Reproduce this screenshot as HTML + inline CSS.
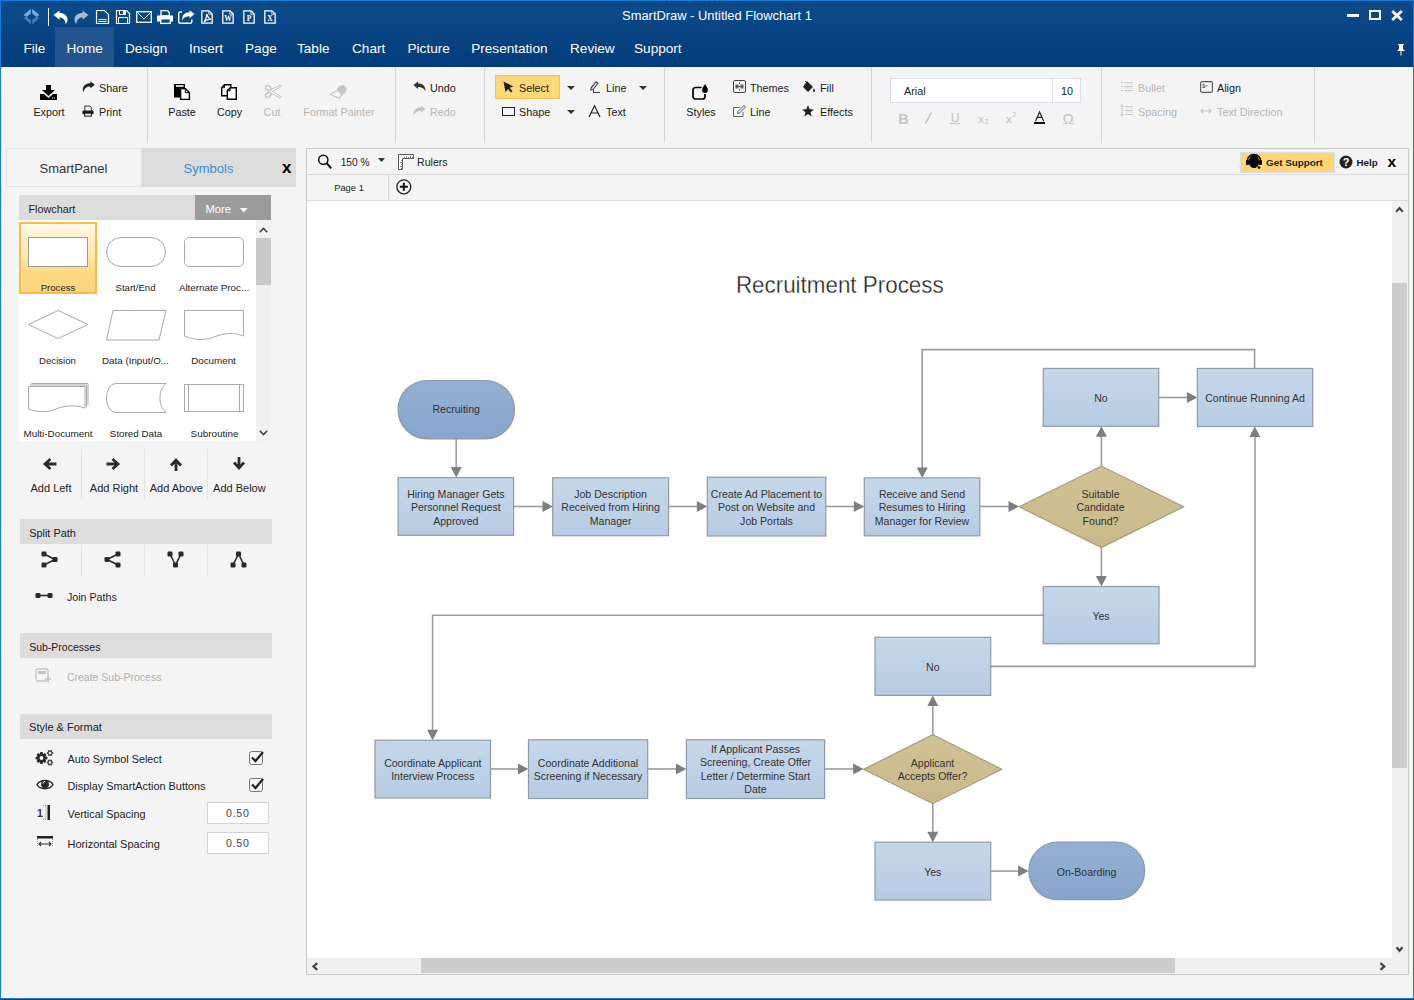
<!DOCTYPE html>
<html><head><meta charset="utf-8">
<style>
*{box-sizing:border-box;margin:0;padding:0}
html,body{width:1414px;height:1000px;overflow:hidden}
body{position:relative;background:#f4f4f4;font-family:"Liberation Sans",sans-serif;color:#222}
.a{position:absolute;white-space:nowrap}
svg.a{overflow:visible}
</style></head>
<body>
<div class="a" style="left:0px;top:0px;width:1414px;height:67px;background:linear-gradient(#0d4c8b,#063f7e 75%,#043d7b)"></div>
<div class="a" style="left:55px;top:27px;width:59px;height:40px;background:#22548f"></div>
<div class="a" style="left:0px;top:0px;width:1414px;height:1px;background:#1b7bd5"></div>
<div class="a" style="left:517px;width:400px;text-align:center;top:9.58px;font-size:12.9px;line-height:12.9px;color:#fff;">SmartDraw - Untitled Flowchart 1</div>
<div class="a" style="left:23.5px;top:41.69px;font-size:13.6px;line-height:13.6px;color:#fff;">File</div>
<div class="a" style="left:66.5px;top:41.69px;font-size:13.6px;line-height:13.6px;color:#fff;">Home</div>
<div class="a" style="left:125px;top:41.69px;font-size:13.6px;line-height:13.6px;color:#fff;">Design</div>
<div class="a" style="left:189px;top:41.69px;font-size:13.6px;line-height:13.6px;color:#fff;">Insert</div>
<div class="a" style="left:245px;top:41.69px;font-size:13.6px;line-height:13.6px;color:#fff;">Page</div>
<div class="a" style="left:297px;top:41.69px;font-size:13.6px;line-height:13.6px;color:#fff;">Table</div>
<div class="a" style="left:352px;top:41.69px;font-size:13.6px;line-height:13.6px;color:#fff;">Chart</div>
<div class="a" style="left:407.5px;top:41.69px;font-size:13.6px;line-height:13.6px;color:#fff;">Picture</div>
<div class="a" style="left:471.2px;top:41.69px;font-size:13.6px;line-height:13.6px;color:#fff;">Presentation</div>
<div class="a" style="left:570px;top:41.69px;font-size:13.6px;line-height:13.6px;color:#fff;">Review</div>
<div class="a" style="left:634px;top:41.69px;font-size:13.6px;line-height:13.6px;color:#fff;">Support</div>
<svg class="a" style="left:23px;top:8px;" width="17" height="17" viewBox="0 0 17 17"><path d="M7.8 .8 L.5 7 L3.5 9 L7.8 5.5Z M9.2 .8 L16.5 7 L13.5 9 L9.2 5.5Z" fill="#6db0ea"/><path d="M.5 9.5 L7.8 16.5 L7.8 12 L3.8 9Z M16.5 9.5 L9.2 16.5 L9.2 12 L13.2 9Z" fill="#3f80c8"/><path d="M5 11.5 L6 13 M12 11.5 L11 13" stroke="#2a5f9f" stroke-width=".8"/></svg>
<div class="a" style="left:48px;top:8px;width:1px;height:18px;background:#e8edf3"></div>
<svg class="a" style="left:53px;top:10px;" width="15" height="14" viewBox="0 0 15 14"><path d="M.5 5 L6.5 .5 V3 C11 3 14.5 5.5 14.5 9.5 C14.5 11.5 13.5 13 12.5 14 C12.5 10 10 7.5 6.5 7.5 V9.8Z" fill="#fff"/></svg>
<svg class="a" style="left:74px;top:10px;" width="15" height="14" viewBox="0 0 15 14"><path d="M14.5 5 L8.5 .5 V3 C4 3 .5 5.5 .5 9.5 C.5 11.5 1.5 13 2.5 14 C2.5 10 5 7.5 8.5 7.5 V9.8Z" fill="#a9b8cc"/></svg>
<svg class="a" style="left:96px;top:10px;" width="13" height="14" viewBox="0 0 13 14"><path d="M.5 .5 H8.5 L12.5 4.5 V13.5 H.5Z" fill="none" stroke="#fff" stroke-width="1.2"/><path d="M2.5 9.5 H10.5 M2.5 11.5 H10.5" stroke="#fff" stroke-width="1"/></svg>
<svg class="a" style="left:116px;top:10px;" width="14" height="14" viewBox="0 0 14 14"><path d="M.5 .5 H10.5 L13.5 3.5 V13.5 H.5Z" fill="none" stroke="#fff" stroke-width="1.2"/><path d="M3.5 .5 V4.5 H9.5 V.5" fill="none" stroke="#fff"/><rect x="7" y="1" width="2" height="3" fill="#fff"/><path d="M2.5 13.5 V7.5 H11.5 V13.5" fill="none" stroke="#fff"/></svg>
<svg class="a" style="left:136px;top:11px;" width="16" height="12" viewBox="0 0 16 12"><rect x=".7" y=".7" width="14.6" height="10.6" fill="none" stroke="#fff" stroke-width="1.3"/><path d="M1 1 L8 8 L15 1" fill="none" stroke="#fff" stroke-width=".9"/></svg>
<svg class="a" style="left:157px;top:10px;" width="16" height="14" viewBox="0 0 16 14"><path d="M4 .7 H10.5 L12.3 2.5 V6 H4Z" fill="none" stroke="#fff" stroke-width="1.3"/><rect x="0" y="5.5" width="16" height="6" fill="#fff"/><rect x="3.7" y="8.8" width="9.6" height="4.6" fill="#0c4888" stroke="#fff" stroke-width="1.3"/></svg>
<svg class="a" style="left:178px;top:10px;" width="17" height="14" viewBox="0 0 17 14"><path d="M4 2 H2.5 C1.3 2 .7 2.7 .7 3.8 V11.7 C.7 12.8 1.3 13.3 2.5 13.3 H12 C13 13.3 13.8 12.8 13.8 11.7 V9.5" fill="none" stroke="#fff" stroke-width="1.4"/><path d="M16.5 4 L11.5 .2 V2.3 C6.5 2.3 4 5 4.3 10.5 C5.5 7.5 8 6.2 11.5 6.2 V8.2Z" fill="#fff"/></svg>
<svg class="a" style="left:201px;top:10px;" width="12" height="14" viewBox="0 0 12 14"><path d="M.8 .8 H8 L11.2 4 V13.2 H.8Z" fill="none" stroke="#fff" stroke-width="1.3"/><path d="M7.8 .8 V4.2 H11.2" fill="none" stroke="#fff" stroke-width=".8"/><path d="M3 12 C5 9 6 6 5.5 4 C6.5 6.5 7.5 8.5 10 9.5 C7.5 9.3 5 10 3 12Z" fill="none" stroke="#fff" stroke-width="1.2"/></svg>
<svg class="a" style="left:222px;top:10px;" width="12" height="14" viewBox="0 0 12 14"><path d="M.8 .8 H8 L11.2 4 V13.2 H.8Z" fill="none" stroke="#fff" stroke-width="1.3"/><path d="M7.8 .8 V4.2 H11.2" fill="none" stroke="#fff" stroke-width=".8"/><text x="6" y="11.3" font-family="Liberation Serif" font-weight="bold" font-size="7.5" fill="#fff" text-anchor="middle">W</text></svg>
<svg class="a" style="left:243px;top:10px;" width="12" height="14" viewBox="0 0 12 14"><path d="M.8 .8 H8 L11.2 4 V13.2 H.8Z" fill="none" stroke="#fff" stroke-width="1.3"/><path d="M7.8 .8 V4.2 H11.2" fill="none" stroke="#fff" stroke-width=".8"/><text x="6" y="11.3" font-family="Liberation Serif" font-weight="bold" font-size="7.5" fill="#fff" text-anchor="middle">P</text></svg>
<svg class="a" style="left:264px;top:10px;" width="12" height="14" viewBox="0 0 12 14"><path d="M.8 .8 H8 L11.2 4 V13.2 H.8Z" fill="none" stroke="#fff" stroke-width="1.3"/><path d="M7.8 .8 V4.2 H11.2" fill="none" stroke="#fff" stroke-width=".8"/><text x="6" y="11.3" font-family="Liberation Serif" font-weight="bold" font-size="7.5" fill="#fff" text-anchor="middle">X</text></svg>
<div class="a" style="left:1347px;top:14px;width:12px;height:3px;background:#fff"></div>
<svg class="a" style="left:1369px;top:10px;" width="12" height="10" viewBox="0 0 12 10"><rect x="1" y="1" width="10" height="8" fill="none" stroke="#fff" stroke-width="2"/></svg>
<svg class="a" style="left:1390px;top:9px;" width="14" height="13" viewBox="0 0 14 13"><path d="M2.2 2 L11.8 11 M11.8 2 L2.2 11" stroke="#fff" stroke-width="2.7"/></svg>
<svg class="a" style="left:1396px;top:43px;" width="10" height="13" viewBox="0 0 10 13"><path d="M2 1 H8 V2 H7 V6 L9 8 H1 L3 6 V2 H2Z" fill="#fff"/><rect x="4.5" y="8" width="1" height="4.5" fill="#fff"/></svg>
<div class="a" style="left:0px;top:67px;width:1414px;height:81px;background:#f4f4f4"></div>
<div class="a" style="left:147px;top:67px;width:1px;height:76px;background:#d6d6d6"></div>
<div class="a" style="left:395px;top:67px;width:1px;height:76px;background:#d6d6d6"></div>
<div class="a" style="left:484px;top:67px;width:1px;height:76px;background:#d6d6d6"></div>
<div class="a" style="left:664px;top:67px;width:1px;height:76px;background:#d6d6d6"></div>
<div class="a" style="left:871px;top:67px;width:1px;height:76px;background:#d6d6d6"></div>
<div class="a" style="left:1101px;top:67px;width:1px;height:76px;background:#d6d6d6"></div>
<div class="a" style="left:1314px;top:67px;width:1px;height:76px;background:#d6d6d6"></div>
<svg class="a" style="left:40px;top:85px;" width="17" height="15" viewBox="0 0 17 15"><path d="M6 0 H11 V5 H15 L8.5 11 L2 5 H6Z" fill="#000"/><path d="M0 9 H4 L8.5 13 L13 9 H17 V15 H0Z" fill="#000"/><rect x="12" y="12.5" width="1" height="1" fill="#fff"/><rect x="14" y="12.5" width="1" height="1" fill="#fff"/></svg>
<div class="a" style="left:-151px;width:400px;text-align:center;top:106.86px;font-size:10.8px;line-height:10.8px;color:#1a1a1a;">Export</div>
<svg class="a" style="left:82px;top:81px;" width="13" height="12" viewBox="0 0 13 12"><path d="M12.8 3.8 L8.3 .3 V2.3 C4 2.3 .8 4.5 .8 8.8 C.8 9.8 1 10.5 1.4 11.2 C2 7.5 4.5 5.6 8.3 5.6 V7.5Z" fill="#222"/></svg>
<div class="a" style="left:99px;top:82.86px;font-size:10.8px;line-height:10.8px;color:#1a1a1a;">Share</div>
<svg class="a" style="left:82px;top:105px;" width="12" height="12" viewBox="0 0 12 12"><path d="M2.8 6 V1 H8 L9.3 2.3 V6" fill="none" stroke="#333" stroke-width="1"/><rect x=".3" y="5.6" width="11.4" height="3.6" rx="1.3" fill="#1f1f1f"/><rect x="2.6" y="8.2" width="6.8" height="2.9" fill="#fff" stroke="#222" stroke-width="1.1"/></svg>
<div class="a" style="left:99px;top:106.86px;font-size:10.8px;line-height:10.8px;color:#1a1a1a;">Print</div>
<svg class="a" style="left:173px;top:83px;" width="18" height="18" viewBox="0 0 18 18"><rect x="1" y="1" width="11" height="13.5" fill="#000"/><rect x="3" y="2" width="7.5" height="2" fill="#d8d8d8"/><path d="M7.6 5.6 H12.4 L16.4 9.6 V16.4 H7.6Z" fill="#fff" stroke="#000" stroke-width="1.4"/><path d="M12.3 5.8 V9.7 H16.2" fill="none" stroke="#000" stroke-width="1"/></svg>
<div class="a" style="left:-18px;width:400px;text-align:center;top:106.86px;font-size:10.8px;line-height:10.8px;color:#1a1a1a;">Paste</div>
<svg class="a" style="left:220px;top:83px;" width="18" height="18" viewBox="0 0 18 18"><path d="M4.6 1.7 H10.8 V12.8 H1.7 V4.6Z" fill="#fff" stroke="#000" stroke-width="1.4"/><path d="M4.6 1.9 V4.7 H1.9" fill="none" stroke="#000" stroke-width="1"/><path d="M10.2 4.7 H16.3 V16.3 H7.3 V7.6Z" fill="#fff" stroke="#000" stroke-width="1.4"/><path d="M10.2 4.9 V7.7 H7.5" fill="none" stroke="#000" stroke-width="1"/></svg>
<div class="a" style="left:29.5px;width:400px;text-align:center;top:106.86px;font-size:10.8px;line-height:10.8px;color:#1a1a1a;">Copy</div>
<svg class="a" style="left:264px;top:84px;" width="18" height="15" viewBox="0 0 18 15"><ellipse cx="4.2" cy="4" rx="3" ry="2.1" transform="rotate(35 4.2 4)" fill="none" stroke="#bdbdbd" stroke-width="1.3"/><ellipse cx="4.2" cy="11" rx="3" ry="2.1" transform="rotate(-35 4.2 11)" fill="none" stroke="#bdbdbd" stroke-width="1.3"/><path d="M6.5 5.8 L16 1.2 L17.2 2.4 L8.5 7.5 L17.2 12.6 L16 13.8 L6.5 9.2" fill="none" stroke="#c4c4c4" stroke-width="1"/></svg>
<div class="a" style="left:72px;width:400px;text-align:center;top:106.86px;font-size:10.8px;line-height:10.8px;color:#b4b4b4;">Cut</div>
<svg class="a" style="left:329px;top:84px;" width="18" height="16" viewBox="0 0 18 16"><path d="M8.5 6.5 C7.5 3.5 9.5 1.5 11.5 2.5 C12.5 .5 15.5 .5 16 2.8 C17.8 3.5 17.8 6 16.5 7.2 C17.2 9 15.5 10.5 14 9.8 L12.3 11.2Z" fill="#c2c2c2"/><path d="M1.2 10.2 L8.8 6.2 L13.2 10 L10.3 14.2 Z" fill="none" stroke="#c8c8c8" stroke-width="1.1"/></svg>
<div class="a" style="left:139px;width:400px;text-align:center;top:106.86px;font-size:10.8px;line-height:10.8px;color:#b4b4b4;">Format Painter</div>
<svg class="a" style="left:413px;top:81px;" width="13" height="11" viewBox="0 0 13 11"><path d="M.5 4 L5 .5 V2.5 C10 2.5 12.5 5 12.5 10.5 C11 7 8 6 5 6 V8Z" fill="#333"/></svg>
<div class="a" style="left:430px;top:82.86px;font-size:10.8px;line-height:10.8px;color:#1a1a1a;">Undo</div>
<svg class="a" style="left:413px;top:105px;" width="13" height="11" viewBox="0 0 13 11"><path d="M12.5 4 L8 .5 V2.5 C3 2.5 .5 5 .5 10.5 C2 7 5 6 8 6 V8Z" fill="#c4c4c4"/></svg>
<div class="a" style="left:430px;top:106.86px;font-size:10.8px;line-height:10.8px;color:#b4b4b4;">Redo</div>
<div class="a" style="left:495px;top:75px;width:65px;height:24px;background:#fdd877;border:1px solid #f3c452"></div>
<svg class="a" style="left:503px;top:81px;" width="11" height="12" viewBox="0 0 11 12"><path d="M.5 .5 L10.3 5.5 L6.6 6.8 L9.6 10.2 L8 11.6 L5.1 8.1 L2.5 11Z" fill="#1a1a1a"/></svg>
<div class="a" style="left:519px;top:82.86px;font-size:10.8px;line-height:10.8px;color:#1a1a1a;">Select</div>
<svg class="a" style="left:567px;top:86px;" width="8" height="4" viewBox="0 0 8 4"><path d="M0 0 H8 L4 4Z" fill="#333"/></svg>
<svg class="a" style="left:502px;top:107px;" width="13" height="9" viewBox="0 0 13 9"><rect x=".5" y=".5" width="12" height="8" fill="none" stroke="#222"/></svg>
<div class="a" style="left:519px;top:106.86px;font-size:10.8px;line-height:10.8px;color:#1a1a1a;">Shape</div>
<svg class="a" style="left:567px;top:110px;" width="8" height="4" viewBox="0 0 8 4"><path d="M0 0 H8 L4 4Z" fill="#333"/></svg>
<svg class="a" style="left:589px;top:81px;" width="12" height="13" viewBox="0 0 12 13"><path d="M7 .8 L9 2.3 L4 8.3 L1.8 9 L2.2 6.8Z" fill="none" stroke="#444" stroke-width="1.1"/><path d="M4.5 8.5 V11.5 H11" fill="none" stroke="#444" stroke-width="1.1"/></svg>
<div class="a" style="left:606px;top:82.86px;font-size:10.8px;line-height:10.8px;color:#1a1a1a;">Line</div>
<svg class="a" style="left:639px;top:86px;" width="8" height="4" viewBox="0 0 8 4"><path d="M0 0 H8 L4 4Z" fill="#333"/></svg>
<svg class="a" style="left:588px;top:105px;" width="13" height="12" viewBox="0 0 13 12"><path d="M1 12 L6.5 .8 L12 12 M3 8 H10" fill="none" stroke="#222" stroke-width="1.2"/></svg>
<div class="a" style="left:606px;top:106.86px;font-size:10.8px;line-height:10.8px;color:#1a1a1a;">Text</div>
<svg class="a" style="left:691px;top:82px;" width="20" height="18" viewBox="0 0 20 18"><rect x="2" y="5.5" width="12" height="11.5" rx="2.5" fill="none" stroke="#000" stroke-width="1.7"/><path d="M14 .8 C15.2 3.5 17.5 5 17.5 8 A3.5 3.5 0 0 1 10.5 8 C10.5 5 12.8 3.5 14 .8Z" fill="#000" stroke="#f4f4f4" stroke-width="1.2"/></svg>
<div class="a" style="left:501px;width:400px;text-align:center;top:106.86px;font-size:10.8px;line-height:10.8px;color:#1a1a1a;">Styles</div>
<svg class="a" style="left:733px;top:80px;" width="13" height="13" viewBox="0 0 13 13"><rect x=".5" y=".5" width="12" height="12" rx="1.5" fill="none" stroke="#444"/><path d="M6.5 2.5 V4 M6.5 9 V10.5 M2.5 6.5 H10.5" stroke="#555"/><rect x="2.5" y="4.5" width="3" height="1.5" fill="#666"/><rect x="7.5" y="4.5" width="3" height="1.5" fill="#666"/><rect x="2.5" y="7" width="3" height="1.5" fill="#666"/><rect x="7.5" y="7" width="3" height="1.5" fill="#666"/></svg>
<div class="a" style="left:750px;top:82.86px;font-size:10.8px;line-height:10.8px;color:#1a1a1a;">Themes</div>
<svg class="a" style="left:733px;top:105px;" width="13" height="12" viewBox="0 0 13 12"><path d="M7 2.5 H.5 V11.5 H10 V7" fill="none" stroke="#666"/><path d="M11 .5 L12.5 2 L6.5 8 L4.5 8.5 L5 6.5Z" fill="none" stroke="#555"/></svg>
<div class="a" style="left:750px;top:106.86px;font-size:10.8px;line-height:10.8px;color:#1a1a1a;">Line</div>
<svg class="a" style="left:802px;top:80px;" width="13" height="13" viewBox="0 0 13 13"><path d="M5 1 L11 7 L6 12 L1 7Z" fill="#222"/><path d="M3 1 L6 4" stroke="#222"/><path d="M12 8 C12.5 9.5 13 10 13 11 A1 1 0 0 1 11 11 C11 10 11.5 9.5 12 8Z" fill="#222"/></svg>
<div class="a" style="left:820px;top:82.86px;font-size:10.8px;line-height:10.8px;color:#1a1a1a;">Fill</div>
<svg class="a" style="left:802px;top:105px;" width="12" height="12" viewBox="0 0 12 12"><path d="M6 0 L7.6 4.2 L12 4.4 L8.5 7.2 L9.7 11.5 L6 9 L2.3 11.5 L3.5 7.2 L0 4.4 L4.4 4.2Z" fill="#222"/></svg>
<div class="a" style="left:820px;top:106.86px;font-size:10.8px;line-height:10.8px;color:#1a1a1a;">Effects</div>
<div class="a" style="left:890px;top:78px;width:191px;height:25px;background:#fff;border:1px solid #d6dde8"></div>
<div class="a" style="left:1052px;top:79px;width:1px;height:23px;background:#d6dde8"></div>
<div class="a" style="left:904px;top:85.86px;font-size:10.8px;line-height:10.8px;color:#1a1a1a;">Arial</div>
<div class="a" style="left:867px;width:400px;text-align:center;top:85.86px;font-size:10.8px;line-height:10.8px;color:#1a1a1a;">10</div>
<div class="a" style="left:703.5px;width:400px;text-align:center;top:111.73px;font-size:14.5px;line-height:14.5px;color:#c4c4c4; font-weight:bold;">B</div>
<svg class="a" style="left:924px;top:112px;" width="9" height="12" viewBox="0 0 9 12"><path d="M7.5 .5 L1.5 11.5" stroke="#bdbdbd" stroke-width="1.4"/></svg>
<div class="a" style="left:755px;width:400px;text-align:center;top:111.84px;font-size:12px;line-height:12px;color:#c0c0c0;">U</div>
<div class="a" style="left:950px;top:123px;width:10px;height:1px;background:#c0c0c0"></div>
<div class="a" style="left:781px;width:400px;text-align:center;top:113.69px;font-size:11px;line-height:11px;color:#c0c0c0;">x</div>
<div class="a" style="left:786.5px;width:400px;text-align:center;top:118.07px;font-size:7px;line-height:7px;color:#c0c0c0;">2</div>
<div class="a" style="left:809px;width:400px;text-align:center;top:113.69px;font-size:11px;line-height:11px;color:#c0c0c0;">x</div>
<div class="a" style="left:814.5px;width:400px;text-align:center;top:111.07px;font-size:7px;line-height:7px;color:#c0c0c0;">2</div>
<svg class="a" style="left:1034px;top:111px;" width="12" height="11" viewBox="0 0 12 11"><path d="M1.5 10.3 L5.6 1 L9.7 10.3 M3.4 6.3 H7.8" fill="none" stroke="#222" stroke-width="1.15"/></svg>
<div class="a" style="left:1034px;top:122px;width:11px;height:2px;background:#111"></div>
<div class="a" style="left:868px;width:400px;text-align:center;top:110.80px;font-size:15px;line-height:15px;color:#c4c4c4;">&#937;</div>
<svg class="a" style="left:1120px;top:81px;" width="14" height="12" viewBox="0 0 14 12"><path d="M4.5 1.5 H13 M4.5 5.5 H13 M4.5 9.5 H13" stroke="#c8c8c8" stroke-width="1.2"/><path d="M1 1.5 H3 M1 5.5 H3 M1 9.5 H3" stroke="#c8c8c8" stroke-width="1.6"/><path d="M4.5 3 H13 M4.5 7 H13 M4.5 11 H13" stroke="#e2e2e2" stroke-width="1"/></svg>
<div class="a" style="left:1138px;top:82.86px;font-size:10.8px;line-height:10.8px;color:#b4b4b4;">Bullet</div>
<svg class="a" style="left:1120px;top:104px;" width="14" height="13" viewBox="0 0 14 13"><path d="M5 2.5 H13 M5 6.5 H13 M5 10.5 H13" stroke="#c8c8c8" stroke-width="1.2"/><path d="M5 4 H13 M5 8 H13" stroke="#e2e2e2" stroke-width="1"/><path d="M2 1 V12 M.5 2.5 L2 .8 L3.5 2.5 M.5 10.5 L2 12.2 L3.5 10.5" fill="none" stroke="#c4c4c4" stroke-width="1"/></svg>
<div class="a" style="left:1138px;top:106.86px;font-size:10.8px;line-height:10.8px;color:#b4b4b4;">Spacing</div>
<svg class="a" style="left:1200px;top:81px;" width="13" height="12" viewBox="0 0 13 12"><rect x=".6" y=".6" width="11.8" height="10.8" rx="1.5" fill="none" stroke="#555" stroke-width="1.1"/><path d="M2.5 3.5 H4.5 M2.5 5 H7.5 M2.5 6.5 H5" stroke="#666" stroke-width="1.1"/></svg>
<div class="a" style="left:1217px;top:82.86px;font-size:10.8px;line-height:10.8px;color:#1a1a1a;">Align</div>
<svg class="a" style="left:1200px;top:108px;" width="12" height="6" viewBox="0 0 12 6"><path d="M1 3 H11 M3 1 L1 3 L3 5 M9 1 L11 3 L9 5" fill="none" stroke="#c4c4c4" stroke-width="1.1"/></svg>
<div class="a" style="left:1217px;top:106.86px;font-size:10.8px;line-height:10.8px;color:#b4b4b4;">Text Direction</div>
<div class="a" style="left:6px;top:148px;width:135px;height:39px;background:#f4f4f4;border:1px solid #e2e2e2;border-right:none"></div>
<div class="a" style="left:141px;top:148px;width:155px;height:39px;background:#dcdcdc"></div>
<div class="a" style="left:-126.5px;width:400px;text-align:center;top:161.80px;font-size:13px;line-height:13px;color:#333;">SmartPanel</div>
<div class="a" style="left:8.5px;width:400px;text-align:center;top:161.80px;font-size:13px;line-height:13px;color:#3d8bd6;">Symbols</div>
<div class="a" style="left:86.80000000000001px;width:400px;text-align:center;top:158.91px;font-size:17px;line-height:17px;color:#000; font-weight:bold;">x</div>
<div class="a" style="left:19px;top:195px;width:252px;height:25px;background:#dcdcdc"></div>
<div class="a" style="left:28.5px;top:203.76px;font-size:10.8px;line-height:10.8px;color:#222;">Flowchart</div>
<div class="a" style="left:195px;top:195px;width:76px;height:25px;background:#9b9b9b"></div>
<div class="a" style="left:205.5px;top:203.92px;font-size:11.2px;line-height:11.2px;color:#fff;">More</div>
<svg class="a" style="left:239.5px;top:207.8px;" width="8" height="5" viewBox="0 0 8 5"><path d="M0 0 H7.5 L3.75 4.5Z" fill="#fff"/></svg>
<div class="a" style="left:19px;top:220px;width:237px;height:221px;background:#fff"></div>
<div class="a" style="left:256px;top:220px;width:15px;height:221px;background:#f0f0f0"></div>
<div class="a" style="left:256px;top:238px;width:15px;height:47px;background:#c8c8c8"></div>
<svg class="a" style="left:259px;top:227px;" width="9" height="6" viewBox="0 0 9 6"><path d="M.8 5.2 L4.5 1.5 L8.2 5.2" fill="none" stroke="#444" stroke-width="1.6"/></svg>
<svg class="a" style="left:259px;top:430px;" width="9" height="6" viewBox="0 0 9 6"><path d="M.8 .8 L4.5 4.5 L8.2 .8" fill="none" stroke="#444" stroke-width="1.6"/></svg>
<div class="a" style="left:19px;top:222px;width:78px;height:72px;background:linear-gradient(#fffaf0,#fdf0c8 20%,#fde8ac 45%,#fcd984 70%,#fcd67c);border:2px solid #f9bd47"></div>
<div class="a" style="left:28px;top:237px;width:60px;height:30px;background:#fff;border:1px solid #9a9a9a"></div>
<svg class="a" style="left:106px;top:237px;" width="61" height="30" viewBox="0 0 61 30"><rect x=".5" y=".5" width="59" height="29" rx="14.5" fill="#fff" stroke="#a8a8a8"/></svg>
<svg class="a" style="left:184px;top:237px;" width="61" height="30" viewBox="0 0 61 30"><rect x=".5" y=".5" width="59" height="29" rx="5" fill="#fff" stroke="#a8a8a8"/></svg>
<div class="a" style="left:-142px;width:400px;text-align:center;top:282.87px;font-size:9.6px;line-height:9.6px;color:#222;">Process</div>
<div class="a" style="left:-64.5px;width:400px;text-align:center;top:282.87px;font-size:9.6px;line-height:9.6px;color:#222;">Start/End</div>
<div class="a" style="left:14px;width:400px;text-align:center;top:282.70px;font-size:9.8px;line-height:9.8px;color:#222;">Alternate Proc...</div>
<svg class="a" style="left:28px;top:310px;" width="61" height="30" viewBox="0 0 61 30"><path d="M30 .5 L60 14.5 L30 28.5 L.5 14.5Z" fill="#fff" stroke="#a8a8a8"/></svg>
<svg class="a" style="left:106px;top:310px;" width="61" height="31" viewBox="0 0 61 31"><path d="M7 .5 H60 L53 30 H.5Z" fill="#fff" stroke="#a8a8a8"/></svg>
<svg class="a" style="left:184px;top:310px;" width="61" height="31" viewBox="0 0 61 31"><path d="M.5 .5 H59.5 V26 C50 22 40 23 30 27 C20 31 10 30 .5 26Z" fill="#fff" stroke="#a8a8a8"/></svg>
<div class="a" style="left:-142.5px;width:400px;text-align:center;top:356.17px;font-size:9.6px;line-height:9.6px;color:#222;">Decision</div>
<div class="a" style="left:-64.5px;width:400px;text-align:center;top:356.00px;font-size:9.8px;line-height:9.8px;color:#222;">Data (Input/O...</div>
<div class="a" style="left:13.5px;width:400px;text-align:center;top:356.00px;font-size:9.8px;line-height:9.8px;color:#222;">Document</div>
<svg class="a" style="left:28px;top:383px;" width="61" height="30" viewBox="0 0 61 30"><path d="M3.5 .5 H60 V22 M2 2 H58.5 V24" fill="none" stroke="#a8a8a8"/><path d="M.5 3.5 H57 V25 C48 22 38 22 28 26 C18 30 9 29 .5 26Z" fill="#fff" stroke="#a8a8a8"/></svg>
<svg class="a" style="left:106px;top:383px;" width="61" height="31" viewBox="0 0 61 31"><path d="M10 .5 H60 C55 5 54 10 54 15 C54 20 55 25 60 29.5 H10 C4 29.5 .5 22 .5 15 C.5 8 4 .5 10 .5Z" fill="#fff" stroke="#a8a8a8"/></svg>
<svg class="a" style="left:184px;top:384px;" width="61" height="29" viewBox="0 0 61 29"><rect x=".5" y=".5" width="59" height="27" fill="#fff" stroke="#a8a8a8"/><path d="M4.5 .5 V27.5 M55.5 .5 V27.5" stroke="#a8a8a8"/></svg>
<div class="a" style="left:-142px;width:400px;text-align:center;top:428.62px;font-size:9.9px;line-height:9.9px;color:#222;">Multi-Document</div>
<div class="a" style="left:-64px;width:400px;text-align:center;top:428.70px;font-size:9.8px;line-height:9.8px;color:#222;">Stored Data</div>
<div class="a" style="left:14.5px;width:400px;text-align:center;top:428.62px;font-size:9.9px;line-height:9.9px;color:#222;">Subroutine</div>
<div class="a" style="left:81px;top:449px;width:1px;height:50px;background:#dfe3ea"></div>
<div class="a" style="left:144px;top:449px;width:1px;height:50px;background:#dfe3ea"></div>
<div class="a" style="left:207px;top:449px;width:1px;height:50px;background:#dfe3ea"></div>
<svg class="a" style="left:42px;top:457px;" width="16" height="14" viewBox="0 0 16 14"><path d="M14.5 7 H4 M8.5 2 L3 7 L8.5 12" fill="none" stroke="#2d2d2d" stroke-width="2.8"/></svg>
<svg class="a" style="left:105px;top:457px;" width="16" height="14" viewBox="0 0 16 14"><path d="M1.5 7 H12 M7.5 2 L13 7 L7.5 12" fill="none" stroke="#2d2d2d" stroke-width="2.8"/></svg>
<svg class="a" style="left:168px;top:457px;" width="16" height="14" viewBox="0 0 16 14"><path d="M8 14 V3.5 M3 8.5 L8 3 L13 8.5" fill="none" stroke="#2d2d2d" stroke-width="2.8"/></svg>
<svg class="a" style="left:231px;top:457px;" width="16" height="14" viewBox="0 0 16 14"><path d="M8 0 V10.5 M3 5.5 L8 11 L13 5.5" fill="none" stroke="#2d2d2d" stroke-width="2.8"/></svg>
<div class="a" style="left:-149px;width:400px;text-align:center;top:483.29px;font-size:11px;line-height:11px;color:#222;">Add Left</div>
<div class="a" style="left:-86px;width:400px;text-align:center;top:483.29px;font-size:11px;line-height:11px;color:#222;">Add Right</div>
<div class="a" style="left:-23.69999999999999px;width:400px;text-align:center;top:483.29px;font-size:11px;line-height:11px;color:#222;">Add Above</div>
<div class="a" style="left:39.400000000000006px;width:400px;text-align:center;top:483.29px;font-size:11px;line-height:11px;color:#222;">Add Below</div>
<div class="a" style="left:19.5px;top:519px;width:252px;height:25px;background:#dcdcdc"></div>
<div class="a" style="left:29.2px;top:527.57px;font-size:10.9px;line-height:10.9px;color:#222;">Split Path</div>
<div class="a" style="left:81px;top:545px;width:1px;height:31px;background:#dfe3ea"></div>
<div class="a" style="left:144px;top:545px;width:1px;height:31px;background:#dfe3ea"></div>
<div class="a" style="left:207px;top:545px;width:1px;height:31px;background:#dfe3ea"></div>
<svg class="a" style="left:41px;top:551px;" width="18" height="18" viewBox="0 0 18 18"><path d="M3 3 L14 8.5 L3 14" fill="none" stroke="#2a2a2a" stroke-width="1.6"/><rect x="0.5" y="0.5" width="5" height="5" rx="1.3" fill="#2a2a2a"/><rect x="11.5" y="6.0" width="5" height="5" rx="1.3" fill="#2a2a2a"/><rect x="0.5" y="11.5" width="5" height="5" rx="1.3" fill="#2a2a2a"/></svg>
<svg class="a" style="left:104px;top:551px;" width="18" height="18" viewBox="0 0 18 18"><path d="M14 3 L3 8.5 L14 14" fill="none" stroke="#2a2a2a" stroke-width="1.6"/><rect x="11.5" y="0.5" width="5" height="5" rx="1.3" fill="#2a2a2a"/><rect x="0.5" y="6.0" width="5" height="5" rx="1.3" fill="#2a2a2a"/><rect x="11.5" y="11.5" width="5" height="5" rx="1.3" fill="#2a2a2a"/></svg>
<svg class="a" style="left:167px;top:551px;" width="18" height="18" viewBox="0 0 18 18"><path d="M3 3 L8.5 14 L14 3" fill="none" stroke="#2a2a2a" stroke-width="1.6"/><rect x="0.5" y="0.5" width="5" height="5" rx="1.3" fill="#2a2a2a"/><rect x="6.0" y="11.5" width="5" height="5" rx="1.3" fill="#2a2a2a"/><rect x="11.5" y="0.5" width="5" height="5" rx="1.3" fill="#2a2a2a"/></svg>
<svg class="a" style="left:230px;top:551px;" width="18" height="18" viewBox="0 0 18 18"><path d="M3 14 L8.5 3 L14 14" fill="none" stroke="#2a2a2a" stroke-width="1.6"/><rect x="0.5" y="11.5" width="5" height="5" rx="1.3" fill="#2a2a2a"/><rect x="6.0" y="0.5" width="5" height="5" rx="1.3" fill="#2a2a2a"/><rect x="11.5" y="11.5" width="5" height="5" rx="1.3" fill="#2a2a2a"/></svg>
<svg class="a" style="left:35px;top:592px;" width="18" height="7" viewBox="0 0 18 7"><path d="M3 3.5 H15" stroke="#2a2a2a" stroke-width="1.6"/><rect x="0.5" y="1.0" width="5" height="5" rx="1.3" fill="#2a2a2a"/><rect x="12.5" y="1.0" width="5" height="5" rx="1.3" fill="#2a2a2a"/></svg>
<div class="a" style="left:66.9px;top:591.84px;font-size:10.7px;line-height:10.7px;color:#222;">Join Paths</div>
<div class="a" style="left:19.5px;top:633px;width:252px;height:25px;background:#dcdcdc"></div>
<div class="a" style="left:29.2px;top:641.91px;font-size:10.5px;line-height:10.5px;color:#222;">Sub-Processes</div>
<svg class="a" style="left:35px;top:668px;" width="18" height="15" viewBox="0 0 18 15"><rect x="1" y="1" width="12" height="12" rx="1.5" fill="none" stroke="#c4c4c4" stroke-width="1.3"/><rect x="3" y="3" width="8" height="3" fill="#c4c4c4"/><path d="M13 8 V14 M10 11 H16" stroke="#c4c4c4" stroke-width="1.6"/></svg>
<div class="a" style="left:66.9px;top:672.01px;font-size:10.5px;line-height:10.5px;color:#b0b0b0;">Create Sub-Process</div>
<div class="a" style="left:19.5px;top:713.5px;width:252px;height:25px;background:#dcdcdc"></div>
<div class="a" style="left:29.1px;top:722.19px;font-size:11px;line-height:11px;color:#222;">Style &amp; Format</div>
<svg class="a" style="left:35px;top:749px;" width="20" height="18" viewBox="0 0 20 18"><path d="M10.63 7.48 L12.38 7.80 L12.38 10.20 L10.63 10.52 L10.49 10.85 L11.50 12.31 L9.81 14.00 L8.35 12.99 L8.02 13.13 L7.70 14.88 L5.30 14.88 L4.98 13.13 L4.65 12.99 L3.19 14.00 L1.50 12.31 L2.51 10.85 L2.37 10.52 L0.62 10.20 L0.62 7.80 L2.37 7.48 L2.51 7.15 L1.50 5.69 L3.19 4.00 L4.65 5.01 L4.98 4.87 L5.30 3.12 L7.70 3.12 L8.02 4.87 L8.35 5.01 L9.81 4.00 L11.50 5.69 L10.49 7.15Z" fill="#2a2a2a"/><circle cx="6.5" cy="9" r="1.9" fill="#f4f4f4"/><path d="M17.05 2.96 L18.18 3.13 L18.18 4.87 L17.05 5.04 L16.93 5.26 L17.35 6.32 L15.83 7.19 L15.13 6.30 L14.87 6.30 L14.17 7.19 L12.65 6.32 L13.07 5.26 L12.95 5.04 L11.82 4.87 L11.82 3.13 L12.95 2.96 L13.07 2.74 L12.65 1.68 L14.17 0.81 L14.87 1.70 L15.13 1.70 L15.83 0.81 L17.35 1.68 L16.93 2.74Z" fill="#444"/><circle cx="15" cy="4" r="1.3" fill="#f4f4f4"/><path d="M17.05 12.46 L18.18 12.63 L18.18 14.37 L17.05 14.54 L16.93 14.76 L17.35 15.82 L15.83 16.69 L15.13 15.80 L14.87 15.80 L14.17 16.69 L12.65 15.82 L13.07 14.76 L12.95 14.54 L11.82 14.37 L11.82 12.63 L12.95 12.46 L13.07 12.24 L12.65 11.18 L14.17 10.31 L14.87 11.20 L15.13 11.20 L15.83 10.31 L17.35 11.18 L16.93 12.24Z" fill="#444"/><circle cx="15" cy="13.5" r="1.3" fill="#f4f4f4"/></svg>
<div class="a" style="left:67.5px;top:753.86px;font-size:10.8px;line-height:10.8px;color:#222;">Auto Symbol Select</div>
<svg class="a" style="left:249px;top:750px;" width="16" height="15" viewBox="0 0 16 15"><rect x=".5" y="1.5" width="13" height="13" rx="2" fill="none" stroke="#777"/><path d="M3 7.5 L6.5 11 L14 2" fill="none" stroke="#222" stroke-width="2.2"/></svg>
<svg class="a" style="left:36px;top:778px;" width="18" height="13" viewBox="0 0 18 13"><path d="M1 6.5 C4 1 14 1 17 6.5 C14 12 4 12 1 6.5Z" fill="none" stroke="#2a2a2a" stroke-width="1.5"/><circle cx="9" cy="6.2" r="3.9" fill="#2a2a2a"/><path d="M7 5.5 A2 2 0 0 1 9 3.5" fill="none" stroke="#f4f4f4" stroke-width="1"/></svg>
<div class="a" style="left:67.5px;top:780.77px;font-size:10.9px;line-height:10.9px;color:#222;">Display SmartAction Buttons</div>
<svg class="a" style="left:249px;top:777px;" width="16" height="15" viewBox="0 0 16 15"><rect x=".5" y="1.5" width="13" height="13" rx="2" fill="none" stroke="#777"/><path d="M3 7.5 L6.5 11 L14 2" fill="none" stroke="#222" stroke-width="2.2"/></svg>
<svg class="a" style="left:37px;top:804px;" width="16" height="17" viewBox="0 0 16 17"><text x="0" y="13" font-family="Liberation Sans" font-weight="bold" font-size="10.5" fill="#333">1</text><path d="M6 1.5 H9 M6 15.5 H9 M9 1.5 V15.5" fill="none" stroke="#999" stroke-dasharray="1 1"/><rect x="10.5" y="1" width="2.5" height="15" fill="#222"/></svg>
<div class="a" style="left:67.5px;top:808.77px;font-size:10.9px;line-height:10.9px;color:#222;">Vertical Spacing</div>
<div class="a" style="left:207px;top:802px;width:62px;height:22px;background:#fff;border:1px solid #d4d4d4"></div>
<div class="a" style="left:37.80000000000001px;width:400px;text-align:center;top:808.03px;font-size:10.6px;line-height:10.6px;color:#444;letter-spacing:0.7px">0.50</div>
<svg class="a" style="left:36px;top:836px;" width="18" height="12" viewBox="0 0 18 12"><rect x="1" y="0" width="16" height="2.5" fill="#222"/><path d="M1.5 3 V11 M16.5 3 V11" stroke="#999" stroke-dasharray="1 1"/><path d="M3 8 H15 M5 6 L3 8 L5 10 M13 6 L15 8 L13 10" fill="none" stroke="#333" stroke-width="1.1"/></svg>
<div class="a" style="left:67.5px;top:838.69px;font-size:11px;line-height:11px;color:#222;">Horizontal Spacing</div>
<div class="a" style="left:207px;top:832px;width:62px;height:22px;background:#fff;border:1px solid #d4d4d4"></div>
<div class="a" style="left:37.80000000000001px;width:400px;text-align:center;top:838.03px;font-size:10.6px;line-height:10.6px;color:#444;letter-spacing:0.7px">0.50</div>
<div class="a" style="left:306px;top:148px;width:1103px;height:827px;background:#fff;border:1px solid #c9c9c9"></div>
<div class="a" style="left:307px;top:149px;width:1101px;height:25px;background:#f4f4f4"></div>
<div class="a" style="left:307px;top:174px;width:1101px;height:1px;background:#dadada"></div>
<div class="a" style="left:307px;top:175px;width:1101px;height:25px;background:#f4f4f4"></div>
<div class="a" style="left:307px;top:200px;width:1101px;height:1px;background:#dadada"></div>
<div class="a" style="left:388px;top:175px;width:1px;height:25px;background:#dadada"></div>
<svg class="a" style="left:317px;top:154px;" width="16" height="16" viewBox="0 0 16 16"><circle cx="6.3" cy="5.8" r="4.6" fill="none" stroke="#111" stroke-width="1.5"/><path d="M9.5 9 L14.3 14.3" stroke="#111" stroke-width="1.9"/></svg>
<div class="a" style="left:340.7px;top:157.77px;font-size:10.2px;line-height:10.2px;color:#222;">150 %</div>
<svg class="a" style="left:378px;top:158px;" width="7" height="4" viewBox="0 0 7 4"><path d="M0 0 H7 L3.5 4Z" fill="#333"/></svg>
<svg class="a" style="left:397px;top:153px;" width="18" height="18" viewBox="0 0 18 18"><path d="M1.5 1.5 H16.5 V5.5 H5.5 V16.5 H1.5Z" fill="#fafafa" stroke="#555" stroke-width="1"/><path d="M7.5 4 V5.5 M9.5 3 V5.5 M11.5 4 V5.5 M13.5 3 V5.5 M15.5 4 V5.5 M4 7.5 H5.5 M3 9.5 H5.5 M4 11.5 H5.5 M3 13.5 H5.5 M4 15.5 H5.5" stroke="#777" stroke-width="1"/></svg>
<div class="a" style="left:417px;top:157.43px;font-size:10.6px;line-height:10.6px;color:#222;">Rulers</div>
<div class="a" style="left:149px;width:400px;text-align:center;top:182.84px;font-size:9.4px;line-height:9.4px;color:#222;">Page 1</div>
<svg class="a" style="left:395px;top:178px;" width="18" height="18" viewBox="0 0 18 18"><circle cx="8.8" cy="8.8" r="7" fill="none" stroke="#222" stroke-width="1.3"/><path d="M8.8 4.8 V12.8 M4.8 8.8 H12.8" stroke="#111" stroke-width="2"/></svg>
<div class="a" style="left:1240px;top:151.5px;width:95px;height:21px;background:#fcd672;border:1px solid #d9dee8"></div>
<svg class="a" style="left:1246px;top:154px;" width="16" height="15" viewBox="0 0 16 15"><path d="M3 8 C3 3.5 5 1 8 1 C11 1 13 3.5 13 8 C13 11.5 11 14 8 14 C5 14 3 11.5 3 8Z" fill="#000"/><path d="M1.5 9 V6.5 A6.5 6 0 0 1 14.5 6.5 V9" fill="none" stroke="#000" stroke-width="1.5"/><rect x="0" y="6" width="3" height="5" rx="1" fill="#000"/><rect x="13" y="6" width="3" height="5" rx="1" fill="#000"/><circle cx="13" cy="13.5" r="1.3" fill="#000"/></svg>
<div class="a" style="left:1266px;top:158.26px;font-size:9.85px;line-height:9.85px;color:#222; font-weight:bold;">Get Support</div>
<svg class="a" style="left:1339px;top:155px;" width="14" height="14" viewBox="0 0 14 14"><circle cx="7" cy="7" r="6.5" fill="#222"/><text x="7" y="11" font-family="Liberation Sans" font-weight="bold" font-size="11" fill="#fff" text-anchor="middle">?</text></svg>
<div class="a" style="left:1356.5px;top:158.30px;font-size:9.8px;line-height:9.8px;color:#222; font-weight:bold;">Help</div>
<div class="a" style="left:1191.8px;width:400px;text-align:center;top:154.08px;font-size:15.5px;line-height:15.5px;color:#000; font-weight:bold;">x</div>
<div class="a" style="left:1392px;top:201px;width:16px;height:773px;background:#f0f0f0"></div>
<div class="a" style="left:1392px;top:283px;width:15px;height:485px;background:#cdcdcd"></div>
<div class="a" style="left:307px;top:958px;width:1085px;height:16px;background:#f0f0f0"></div>
<div class="a" style="left:1392px;top:958px;width:16px;height:16px;background:#f0f0f0"></div>
<div class="a" style="left:421px;top:958px;width:754px;height:15px;background:#cdcdcd"></div>
<svg class="a" style="left:1395px;top:206px;" width="9" height="7" viewBox="0 0 9 7"><path d="M1.2 5.8 L4.5 2 L7.8 5.8" fill="none" stroke="#444" stroke-width="2.1"/></svg>
<svg class="a" style="left:1395px;top:945.5px;" width="9" height="7" viewBox="0 0 9 7"><path d="M1.5 1.2 L4.5 4.8 L7.5 1.2" fill="none" stroke="#444" stroke-width="2.3"/></svg>
<svg class="a" style="left:311px;top:961.5px;" width="8" height="9" viewBox="0 0 8 9"><path d="M6.3 1.2 L2.5 4.5 L6.3 7.8" fill="none" stroke="#444" stroke-width="2.2"/></svg>
<svg class="a" style="left:1378.5px;top:961.5px;" width="8" height="9" viewBox="0 0 8 9"><path d="M1.5 1.2 L5.2 4.5 L1.5 7.8" fill="none" stroke="#444" stroke-width="2.3"/></svg>
<svg class="a" style="left:0;top:0" width="1414" height="1000" viewBox="0 0 1414 1000"><defs><linearGradient id="gb" x1="0" y1="0" x2="0" y2="1"><stop offset="0" stop-color="#c6d7e9"/><stop offset="1" stop-color="#b6cbe4"/></linearGradient><linearGradient id="gp" x1="0" y1="0" x2="0" y2="1"><stop offset="0" stop-color="#93b0d4"/><stop offset="1" stop-color="#88a5cc"/></linearGradient><linearGradient id="gd" x1="0" y1="0" x2="0" y2="1"><stop offset="0" stop-color="#d0c296"/><stop offset="1" stop-color="#c9b98a"/></linearGradient></defs><g font-family="Liberation Sans"><text x="839.8" y="292.8" text-anchor="middle" font-size="22.4" fill="#262626" stroke="#fff" stroke-width="0.28" transform="translate(0 292.8) scale(1 1.07) translate(0 -292.8)">Recruitment Process</text><path d="M456.2 439 L456.2 470" fill="none" stroke="#9c9c9c" stroke-width="1.6"/><path d="M456.2 477.6 L450.7 467.1 L461.7 467.1Z" fill="#7a807f"/><path d="M514 506.5 L545 506.5" fill="none" stroke="#9c9c9c" stroke-width="1.6"/><path d="M553.0 506.5 L542.5 501.0 L542.5 512.0Z" fill="#7a807f"/><path d="M668.6 506.5 L699.3 506.5" fill="none" stroke="#9c9c9c" stroke-width="1.6"/><path d="M707.3 506.5 L696.8 501.0 L696.8 512.0Z" fill="#7a807f"/><path d="M825.8 506.5 L856.3 506.5" fill="none" stroke="#9c9c9c" stroke-width="1.6"/><path d="M864.3 506.5 L853.8 501.0 L853.8 512.0Z" fill="#7a807f"/><path d="M979.8 506.5 L1011 506.5" fill="none" stroke="#9c9c9c" stroke-width="1.6"/><path d="M1019.0 506.5 L1008.5 501.0 L1008.5 512.0Z" fill="#7a807f"/><path d="M1101.4 466 L1101.4 433" fill="none" stroke="#9c9c9c" stroke-width="1.6"/><path d="M1101.4 426.3 L1095.9 436.8 L1106.9 436.8Z" fill="#7a807f"/><path d="M1158.7 397.5 L1190 397.5" fill="none" stroke="#9c9c9c" stroke-width="1.6"/><path d="M1197.4 397.5 L1186.9 392.0 L1186.9 403.0Z" fill="#7a807f"/><path d="M1254.6 368.4 L1254.6 349.6 L922.2 349.6 L922.2 470" fill="none" stroke="#9c9c9c" stroke-width="1.6"/><path d="M922.2 477.9 L916.7 467.4 L927.7 467.4Z" fill="#7a807f"/><path d="M1101.4 547.4 L1101.4 579" fill="none" stroke="#9c9c9c" stroke-width="1.6"/><path d="M1101.4 586.5 L1095.9 576.0 L1106.9 576.0Z" fill="#7a807f"/><path d="M1043.2 615.3 L432.6 615.3 L432.6 733" fill="none" stroke="#9c9c9c" stroke-width="1.6"/><path d="M432.6 740.2 L427.1 729.7 L438.1 729.7Z" fill="#7a807f"/><path d="M490.5 769 L520.4 769" fill="none" stroke="#9c9c9c" stroke-width="1.6"/><path d="M528.4 769.0 L517.9 763.5 L517.9 774.5Z" fill="#7a807f"/><path d="M647.7 769 L678.3 769" fill="none" stroke="#9c9c9c" stroke-width="1.6"/><path d="M686.3 769.0 L675.8 763.5 L675.8 774.5Z" fill="#7a807f"/><path d="M824.6 769 L855.6 769" fill="none" stroke="#9c9c9c" stroke-width="1.6"/><path d="M863.6 769.0 L853.1 763.5 L853.1 774.5Z" fill="#7a807f"/><path d="M932.8 734.7 L932.8 702" fill="none" stroke="#9c9c9c" stroke-width="1.6"/><path d="M932.8 695.4 L927.3 705.9 L938.3 705.9Z" fill="#7a807f"/><path d="M990.7 666.4 L1255 666.4 L1255 433" fill="none" stroke="#9c9c9c" stroke-width="1.6"/><path d="M1254.8 426.5 L1249.3 437.0 L1260.3 437.0Z" fill="#7a807f"/><path d="M932.8 803.7 L932.8 835" fill="none" stroke="#9c9c9c" stroke-width="1.6"/><path d="M932.8 842.2 L927.3 831.7 L938.3 831.7Z" fill="#7a807f"/><path d="M990.7 871.1 L1021 871.1" fill="none" stroke="#9c9c9c" stroke-width="1.6"/><path d="M1028.6 871.1 L1018.1 865.6 L1018.1 876.6Z" fill="#7a807f"/><rect x="398" y="380.5" width="116.5" height="58.30000000000001" rx="29.150000000000006" fill="url(#gp)" stroke="#8a98a8" stroke-width="1.2"/><text x="456.2" y="413.3" text-anchor="middle" font-size="10.55" fill="#333">Recruiting</text><rect x="398.1" y="477.6" width="115.5" height="57.69999999999993" fill="url(#gb)" stroke="#8f9ba6" stroke-width="1.2"/><text x="455.8" y="497.8" text-anchor="middle" font-size="10.55" fill="#333">Hiring Manager Gets</text><text x="455.8" y="511.2" text-anchor="middle" font-size="10.55" fill="#333">Personnel Request</text><text x="455.8" y="524.6" text-anchor="middle" font-size="10.55" fill="#333">Approved</text><rect x="552.7" y="477.8" width="115.89999999999998" height="57.900000000000034" fill="url(#gb)" stroke="#8f9ba6" stroke-width="1.2"/><text x="610.6" y="497.8" text-anchor="middle" font-size="10.55" fill="#333">Job Description</text><text x="610.6" y="511.2" text-anchor="middle" font-size="10.55" fill="#333">Received from Hiring</text><text x="610.6" y="524.6" text-anchor="middle" font-size="10.55" fill="#333">Manager</text><rect x="707.3" y="477.2" width="118.5" height="58.80000000000001" fill="url(#gb)" stroke="#8f9ba6" stroke-width="1.2"/><text x="766.5" y="497.8" text-anchor="middle" font-size="10.55" fill="#333">Create Ad Placement to</text><text x="766.5" y="511.2" text-anchor="middle" font-size="10.55" fill="#333">Post on Website and</text><text x="766.5" y="524.6" text-anchor="middle" font-size="10.55" fill="#333">Job Portals</text><rect x="864.3" y="477.9" width="115.5" height="57.89999999999998" fill="url(#gb)" stroke="#8f9ba6" stroke-width="1.2"/><text x="922" y="497.8" text-anchor="middle" font-size="10.55" fill="#333">Receive and Send</text><text x="922" y="511.2" text-anchor="middle" font-size="10.55" fill="#333">Resumes to Hiring</text><text x="922" y="524.6" text-anchor="middle" font-size="10.55" fill="#333">Manager for Review</text><path d="M1019.1000000000001 506.8 L1101.4 466.0 L1183.7 506.8 L1101.4 547.6Z" fill="url(#gd)" stroke="#a19a7f" stroke-width="1.1"/><text x="1100.5" y="497.8" text-anchor="middle" font-size="10.55" fill="#333">Suitable</text><text x="1100.5" y="511.2" text-anchor="middle" font-size="10.55" fill="#333">Candidate</text><text x="1100.5" y="524.6" text-anchor="middle" font-size="10.55" fill="#333">Found?</text><rect x="1043.3" y="368.4" width="115.40000000000009" height="57.900000000000034" fill="url(#gb)" stroke="#8f9ba6" stroke-width="1.2"/><text x="1101" y="401.9" text-anchor="middle" font-size="10.55" fill="#333">No</text><rect x="1197.4" y="368.4" width="115.29999999999995" height="58.10000000000002" fill="url(#gb)" stroke="#8f9ba6" stroke-width="1.2"/><text x="1255" y="401.9" text-anchor="middle" font-size="10.55" fill="#333">Continue Running Ad</text><rect x="1043.2" y="586.5" width="115.79999999999995" height="57.299999999999955" fill="url(#gb)" stroke="#8f9ba6" stroke-width="1.2"/><text x="1101" y="620.0" text-anchor="middle" font-size="10.55" fill="#333">Yes</text><rect x="875" y="637.3" width="115.70000000000005" height="58.10000000000002" fill="url(#gb)" stroke="#8f9ba6" stroke-width="1.2"/><text x="932.8" y="670.6" text-anchor="middle" font-size="10.55" fill="#333">No</text><rect x="375" y="740.2" width="115.5" height="57.799999999999955" fill="url(#gb)" stroke="#8f9ba6" stroke-width="1.2"/><text x="432.8" y="766.6" text-anchor="middle" font-size="10.55" fill="#333">Coordinate Applicant</text><text x="432.8" y="780.0" text-anchor="middle" font-size="10.55" fill="#333">Interview Process</text><rect x="528.5" y="739.8" width="119.20000000000005" height="58.700000000000045" fill="url(#gb)" stroke="#8f9ba6" stroke-width="1.2"/><text x="588" y="766.7" text-anchor="middle" font-size="10.55" fill="#333">Coordinate Additional</text><text x="588" y="780.1" text-anchor="middle" font-size="10.55" fill="#333">Screening if Necessary</text><rect x="686.4" y="739.8" width="138.20000000000005" height="58.700000000000045" fill="url(#gb)" stroke="#8f9ba6" stroke-width="1.2"/><text x="755.5" y="752.5" text-anchor="middle" font-size="10.55" fill="#333">If Applicant Passes</text><text x="755.5" y="766.1" text-anchor="middle" font-size="10.55" fill="#333">Screening, Create Offer</text><text x="755.5" y="779.7" text-anchor="middle" font-size="10.55" fill="#333">Letter / Determine Start</text><text x="755.5" y="793.3" text-anchor="middle" font-size="10.55" fill="#333">Date</text><path d="M863.6 769.2 L932.7 734.7 L1001.8000000000001 769.2 L932.7 803.7Z" fill="url(#gd)" stroke="#a19a7f" stroke-width="1.1"/><text x="932.5" y="766.6" text-anchor="middle" font-size="10.55" fill="#333">Applicant</text><text x="932.5" y="779.7" text-anchor="middle" font-size="10.55" fill="#333">Accepts Offer?</text><rect x="875" y="842.2" width="115.70000000000005" height="57.799999999999955" fill="url(#gb)" stroke="#8f9ba6" stroke-width="1.2"/><text x="932.8" y="875.8" text-anchor="middle" font-size="10.55" fill="#333">Yes</text><rect x="1028.9" y="842" width="115.79999999999995" height="57.700000000000045" rx="28.850000000000023" fill="url(#gp)" stroke="#8a98a8" stroke-width="1.2"/><text x="1086.6" y="875.7" text-anchor="middle" font-size="10.55" fill="#333">On-Boarding</text></g></svg>
<div class="a" style="left:0px;top:0px;width:1px;height:1000px;background:#1b7bd5"></div>
<div class="a" style="left:1413px;top:0px;width:1px;height:1000px;background:#1b7bd5"></div>
<div class="a" style="left:0px;top:998px;width:1414px;height:1px;background:#1b7bd5"></div>
<div class="a" style="left:0px;top:999px;width:1414px;height:1px;background:#3b3b3b"></div>
</body></html>
